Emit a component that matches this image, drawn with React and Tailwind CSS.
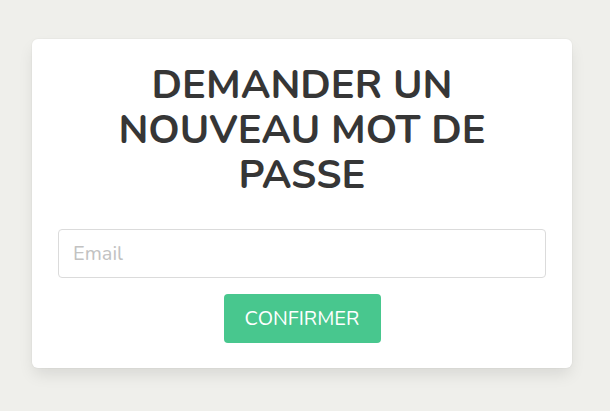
export default function App() {
  return (
    <div className="min-h-[411px] w-full bg-[#efefeb] pt-[39px] px-[32px]" style={{ fontFamily: '"Nunito", Lato, "Noto Sans", sans-serif' }}>
      <div className="w-[540px] bg-white rounded-[6px] shadow-[0_8px_16px_-2px_rgba(10,10,10,0.1),0_0_0_1px_rgba(10,10,10,0.02)] px-[26px] pt-[24px] pb-[25px]">
        <h1 className="text-center text-[#363636] font-bold text-[40px] leading-[45px] px-[50px]">
          DEMANDER UN NOUVEAU MOT DE PASSE
        </h1>
        <div className="mt-[31px]">
          <input
            type="text"
            placeholder="Email"
            className="w-full h-[49px] border border-[#dbdbdb] rounded-[4px] px-[14px] text-[20px] text-[#363636] placeholder:text-[#c2c2c2] outline-none"
          />
        </div>
        <div className="flex justify-center mt-[16px]">
          <button className="w-[157px] h-[49px] bg-[#48c78e] text-white text-[20px] rounded-[4px]">
            CONFIRMER
          </button>
        </div>
      </div>
    </div>
  );
}
